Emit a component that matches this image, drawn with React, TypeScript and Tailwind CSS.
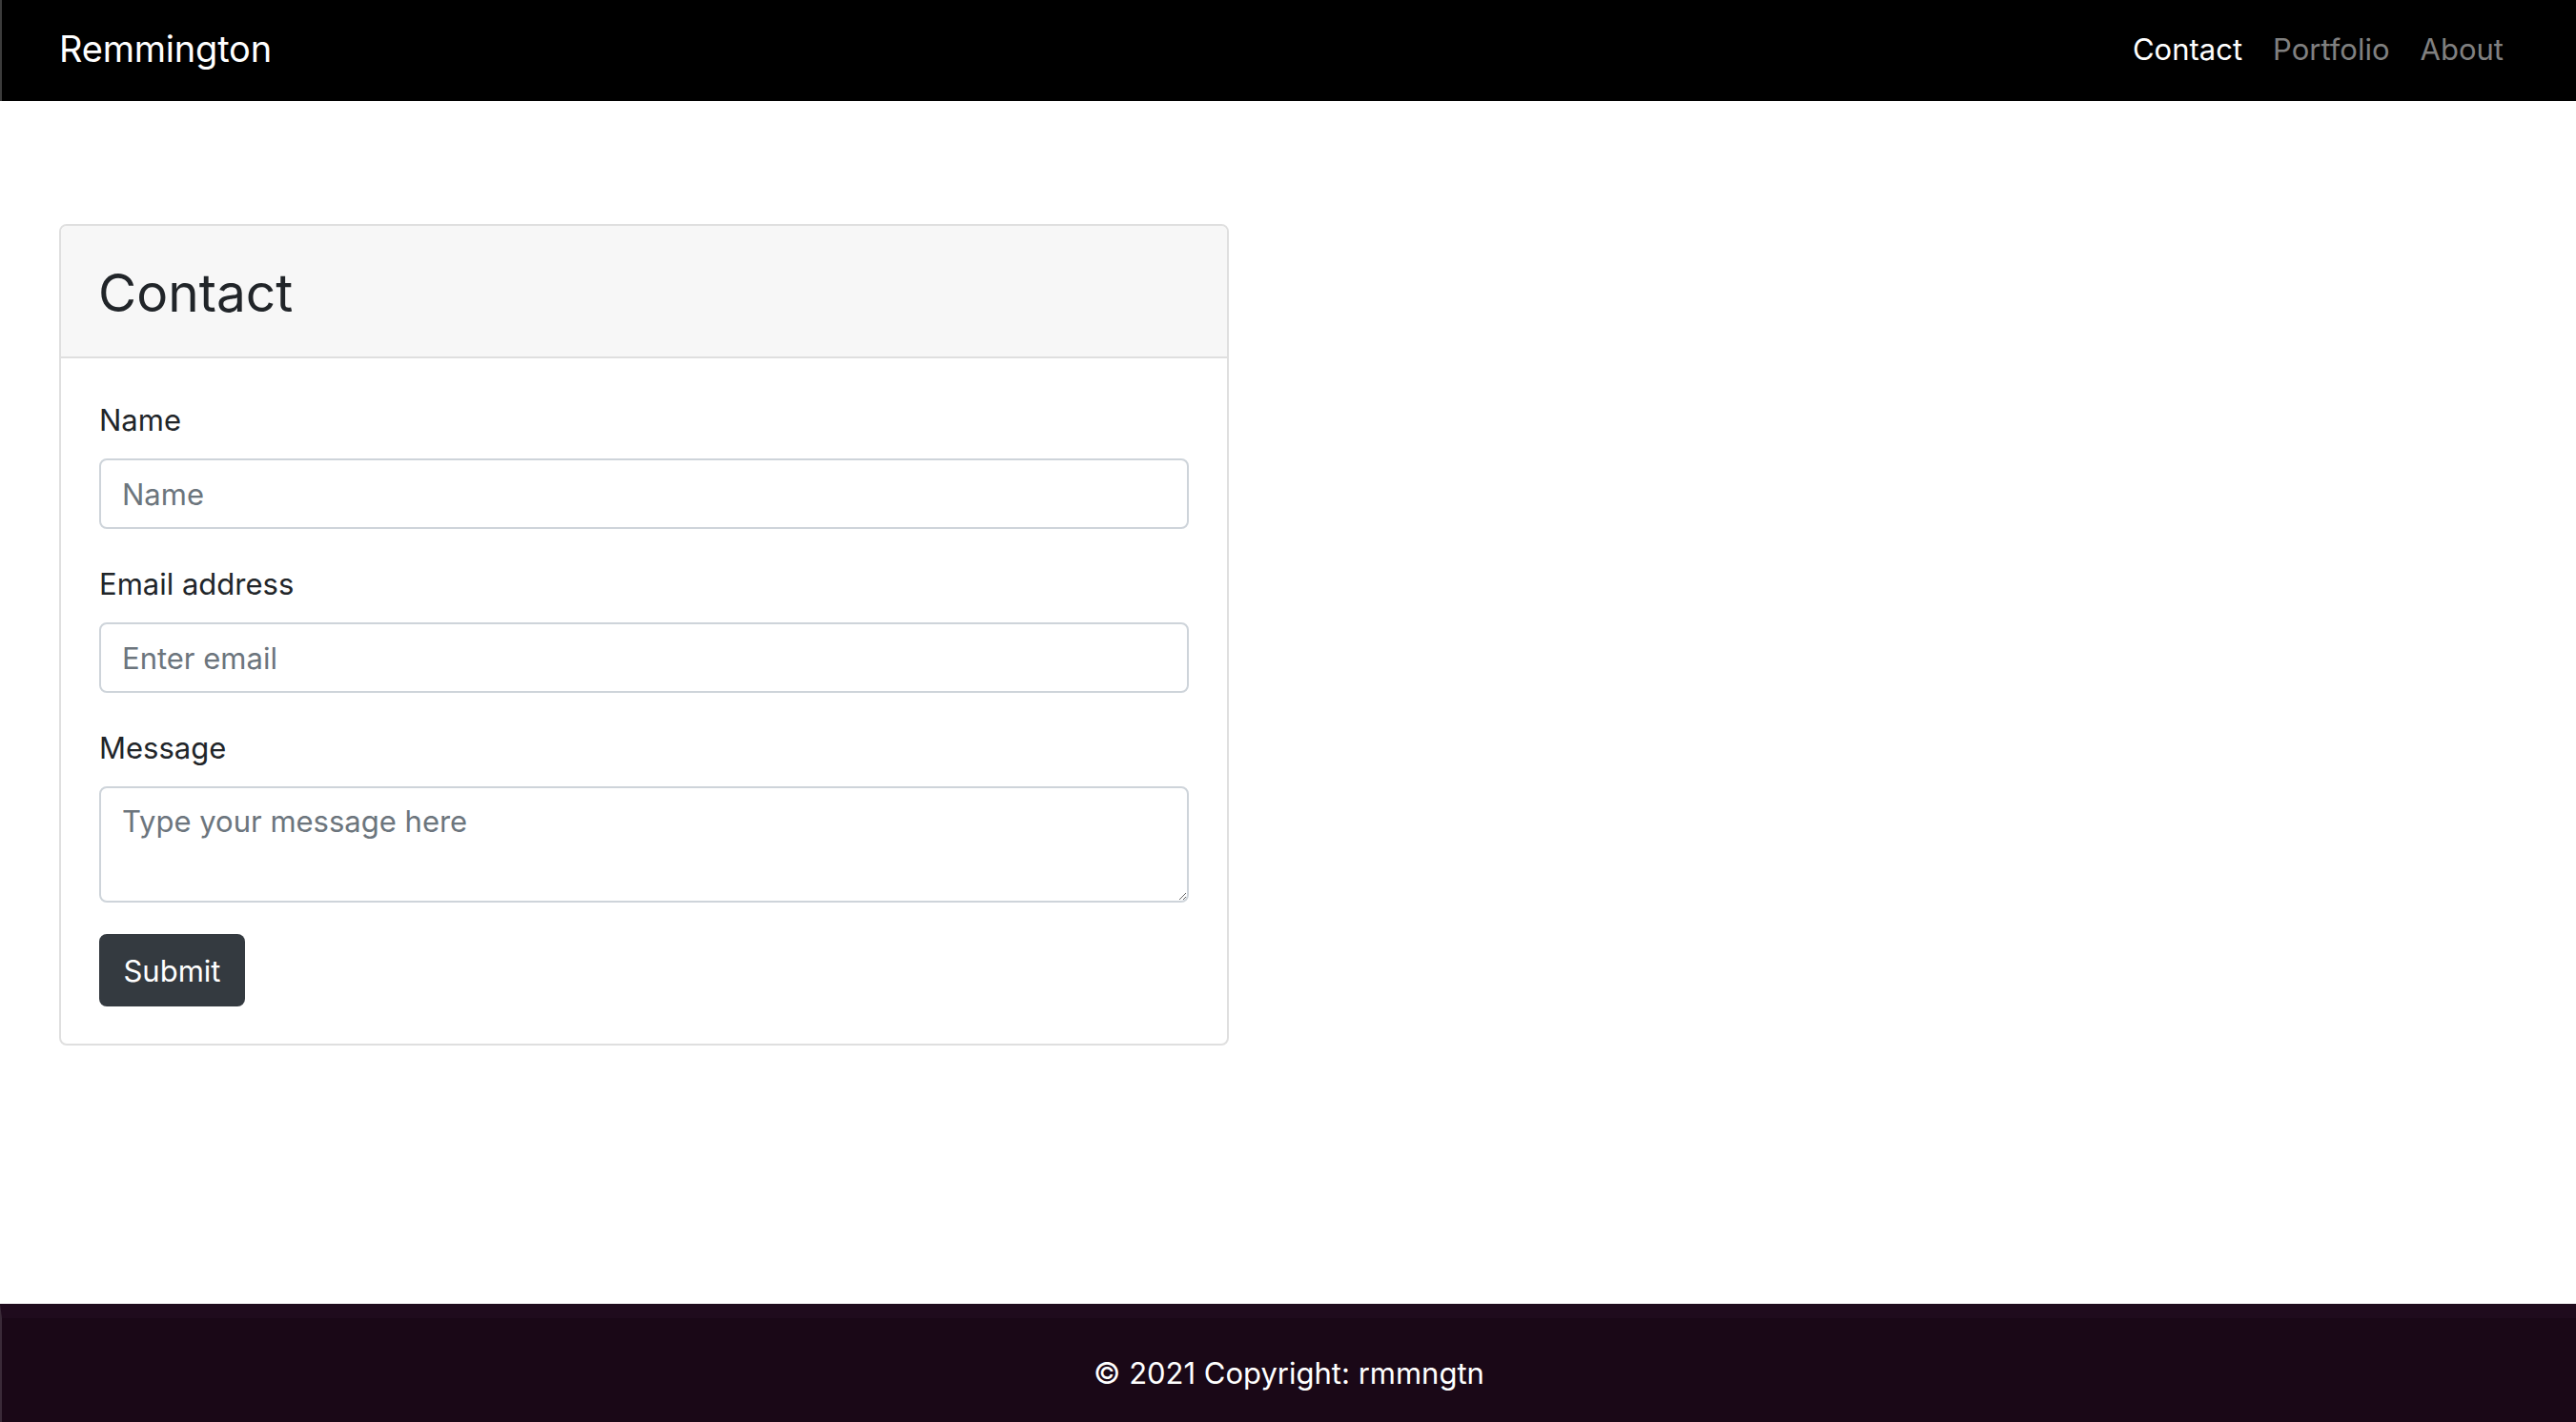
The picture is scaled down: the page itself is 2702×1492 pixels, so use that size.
import { useState } from "react";

const links = [
  { label: "Contact", active: true },
  { label: "Portfolio", active: false },
  { label: "About", active: false },
];

function Navbar() {
  return (
    <nav className="h-[106px] shrink-0 bg-black border-l-2 border-[#3c3c3c] flex items-center justify-between pl-[60px] pr-[76px] pb-[4px]">
      <a href="#" className="text-[38px] leading-none text-white tracking-[-0.2px]">
        Remmington
      </a>
      <ul className="flex gap-[32px] text-[31px] leading-none">
        {links.map((l) => (
          <li key={l.label}>
            <a
              href="#"
              className={l.active ? "text-white" : "text-[#808080]"}
            >
              {l.label}
            </a>
          </li>
        ))}
      </ul>
    </nav>
  );
}

function Field({
  label,
  children,
  className = "mb-[35px]",
}: {
  label: string;
  children: React.ReactNode;
  className?: string;
}) {
  return (
    <div className={className}>
      <label className="block text-[31px] leading-[46px] mb-[17px]">{label}</label>
      {children}
    </div>
  );
}

const inputCls =
  "block w-full border-2 border-[#ced4da] rounded-[8px] px-[22px] text-[31px] text-[#495057] placeholder:text-[#6c757d] outline-none bg-white";

function ContactCard() {
  const [name, setName] = useState("");
  const [email, setEmail] = useState("");
  const [message, setMessage] = useState("");

  return (
    <div className="w-[1227px] border-2 border-[#dfdfdf] rounded-[8px] bg-white">
      <div className="h-[139px] bg-[#f7f7f7] border-b-2 border-[#dfdfdf] rounded-t-[6px] flex items-center px-[39px] pt-[4px]">
        <h1 className="text-[55px] leading-none text-[#212529]">Contact</h1>
      </div>
      <form
        className="px-[40px] pt-[42px] pb-[39px]"
        onSubmit={(e) => e.preventDefault()}
      >
        <Field label="Name">
          <input
            className={inputCls + " h-[74px]"}
            placeholder="Name"
            value={name}
            onChange={(e) => setName(e.target.value)}
          />
        </Field>
        <Field label="Email address">
          <input
            type="email"
            className={inputCls + " h-[74px]"}
            placeholder="Enter email"
            value={email}
            onChange={(e) => setEmail(e.target.value)}
          />
        </Field>
        <Field label="Message" className="mb-[33px]">
          <textarea
            className={inputCls + " h-[122px] py-[12px] leading-[46px]"}
            placeholder="Type your message here"
            value={message}
            onChange={(e) => setMessage(e.target.value)}
          />
        </Field>
        <button
          type="submit"
          className="w-[153px] h-[76px] bg-[#343a40] text-white text-[31px] leading-none rounded-[8px]"
        >
          Submit
        </button>
      </form>
    </div>
  );
}

export default function App() {
  return (
    <div className="min-h-screen flex flex-col bg-white text-[#212529] font-['Inter',sans-serif]">
      <Navbar />
      <main className="flex-1 pt-[129px] px-[62px]">
        <ContactCard />
      </main>
      <footer className="h-[124px] shrink-0 bg-[#1a0817] border-t-[15px] border-[#1f0b1d] border-l-2 border-l-[#3a2a38] flex items-center justify-center pt-[6px]">
        <span className="text-white text-[31px] leading-none">
          © 2021 Copyright: rmmngtn
        </span>
      </footer>
    </div>
  );
}
